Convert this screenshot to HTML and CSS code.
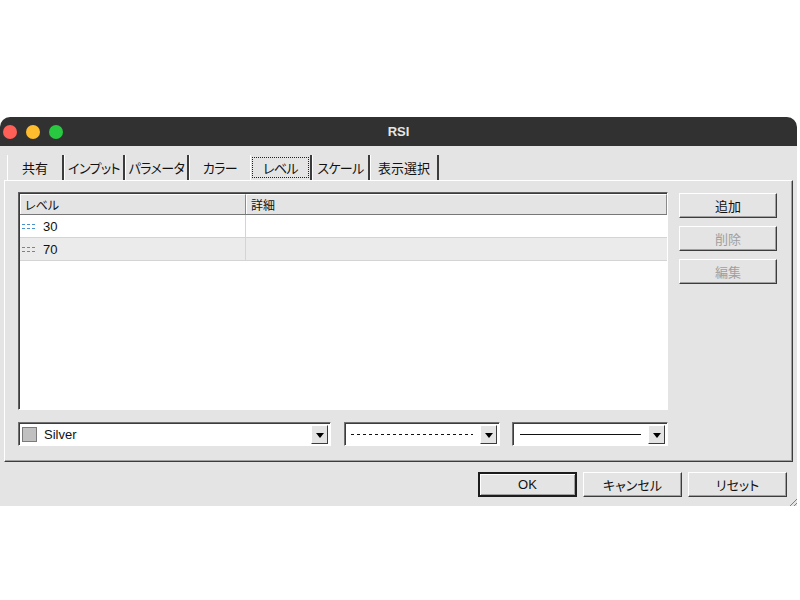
FILE: index.html
```html
<!DOCTYPE html>
<html lang="ja">

<head>
	<meta charset="utf-8">
	<title>RSI</title>
	<link rel="stylesheet" href="styles.css">
</head>

<body>

	<div class="window">

		<div class="titlebar">
			<div class="lights">
				<span class="light red"></span>
				<span class="light yellow"></span>
				<span class="light green"></span>
			</div>
			<div class="title">RSI</div>
		</div>

		<div class="dialog">

			<!-- tab strip -->
			<div class="tabs">
				<div class="tab">共有</div>
				<div class="tab">インプット</div>
				<div class="tab">パラメータ</div>
				<div class="tab tab-plain">カラー</div>
				<div class="tab active"><span class="focus">レベル</span></div>
				<div class="tab">スケール</div>
				<div class="tab">表示選択</div>
			</div>

			<div class="panel">

				<div class="top-area">
					<div class="list">
						<div class="list-head">
							<div class="hcell col-level">レベル</div>
							<div class="hcell col-desc">詳細</div>
						</div>
						<div class="row">
							<div class="cell col-level">
								<svg class="dots" width="14" height="8" viewBox="0 0 14 8">
									<line x1="0" y1="2.5" x2="14" y2="2.5" stroke="#4a90cc" stroke-dasharray="3 2" />
									<line x1="0" y1="6.5" x2="14" y2="6.5" stroke="#4a90cc" stroke-dasharray="3 2" />
								</svg>30
							</div>
							<div class="cell col-desc"></div>
						</div>
						<div class="row alt">
							<div class="cell col-level">
								<svg class="dots" width="14" height="8" viewBox="0 0 14 8">
									<line x1="0" y1="2.5" x2="14" y2="2.5" stroke="#4a90cc" stroke-dasharray="3 2" />
									<line x1="0" y1="6.5" x2="14" y2="6.5" stroke="#4a90cc" stroke-dasharray="3 2" />
								</svg>70
							</div>
							<div class="cell col-desc"></div>
						</div>
					</div>

					<div class="side-buttons">
						<button class="btn">追加</button>
						<button class="btn disabled">削除</button>
						<button class="btn disabled">編集</button>
					</div>
				</div>

				<div class="combos">
					<div class="combo combo-color">
						<span class="swatch"></span>
						<span class="combo-text">Silver</span>
						<span class="drop"><span class="arrow"></span></span>
					</div>
					<div class="combo combo-style">
						<span class="line-dash"></span>
						<span class="drop"><span class="arrow"></span></span>
					</div>
					<div class="combo combo-width">
						<span class="line-solid"></span>
						<span class="drop"><span class="arrow"></span></span>
					</div>
				</div>

			</div>

			<div class="footer">
				<button class="btn default">OK</button>
				<button class="btn">キャンセル</button>
				<button class="btn">リセット</button>
			</div>

			<!-- resize grip in the corner -->
			<svg class="grip" width="8" height="8" viewBox="0 0 8 8">
				<line x1="8" y1="1" x2="1" y2="8" stroke="#808080" />
				<line x1="8" y1="5" x2="5" y2="8" stroke="#808080" />
			</svg>

		</div>
	</div>

</body>

</html>
```

FILE: styles.css
```css
body {
	margin: 0;
	padding: 0;
	background-color: #fff;
	font-family: "Liberation Sans", "Noto Sans CJK JP", sans-serif;
	font-size: 13px;
	color: #111;
	font-feature-settings: "palt" 1;
}

.window {
	width: 797px;
	margin-top: 117px;
	border-radius: 10px 10px 0 0;
	overflow: hidden;
}

/* mac style title bar */
.titlebar {
	position: relative;
	height: 29px;
	background-color: #313131;
	display: flex;
	align-items: center;
}

.lights {
	display: flex;
	gap: 9px;
	padding-left: 3px;
}

.light {
	width: 14px;
	height: 14px;
	border-radius: 50%;
}

.red {
	background-color: #fe5f57;
}

.yellow {
	background-color: #febc2e;
}

.green {
	background-color: #28c840;
}

.title {
	position: absolute;
	left: 0;
	right: 0;
	text-align: center;
	color: #e6e6e6;
	font-weight: bold;
	font-size: 13px;
}

.dialog {
	position: relative;
	background-color: #e4e4e4;
	padding: 9px 4px 9px 4px;
}

/* tabs */
.tabs {
	display: flex;
	height: 25px;
	padding-left: 3px;
}

.tab {
	height: 25px;
	padding: 0;
	display: flex;
	align-items: center;
	justify-content: center;
	border-left: 1px solid #fff;
	border-right: 2px solid #3c3c3c;
	box-sizing: border-box;
	font-size: 13px;
	letter-spacing: -0.6px;
	white-space: nowrap;
}

.tab:nth-child(1) {
	width: 57px;
	letter-spacing: 0;
}

.tab:nth-child(2) {
	width: 61px;
}

.tab:nth-child(3) {
	width: 64px;
}

.tab:nth-child(4) {
	width: 61px;
	border-right: none;
}

.tab:nth-child(5) {
	width: 62px;
	padding: 2px 1px;
}

.tab:nth-child(6) {
	width: 58px;
}

.tab:nth-child(7) {
	width: 69px;
	letter-spacing: 0;
}

.focus {
	flex: 1;
	align-self: stretch;
	display: flex;
	align-items: center;
	justify-content: center;
	border: 1px dotted #222;
}

.panel {
	border: 1px solid;
	border-color: #fff #3c3c3c #3c3c3c #fff;
	box-shadow: inset -1px -1px #a0a0a0;
	padding: 11px 13px 15px 13px;
}

.top-area {
	display: flex;
	gap: 11px;
}

/* list view */
.list {
	width: 650px;
	height: 218px;
	box-sizing: border-box;
	background-color: #fff;
	border: 1px solid;
	border-color: #606060 #fff #fff #606060;
	box-shadow: inset 1px 1px #3c3c3c;
	padding: 1px 0 0 1px;
}

.list-head {
	display: flex;
	height: 20px;
	background-color: #e4e4e4;
	border-bottom: 1px solid #777;
}

.hcell {
	box-sizing: border-box;
	display: flex;
	align-items: center;
	padding-left: 4px;
	border-left: 1px solid #fff;
	border-top: 1px solid #fff;
	border-right: 1px solid #8a8a8a;
	font-size: 12px;
}

.col-level {
	width: 226px;
}

.col-desc {
	flex: 1;
}

.row {
	display: flex;
	height: 23px;
	border-bottom: 1px solid #d4d4d4;
	box-sizing: border-box;
}

.row.alt {
	background-color: #ebebeb;
}

.cell {
	box-sizing: border-box;
	display: flex;
	align-items: center;
	border-right: 1px solid #d4d4d4;
}

.cell.col-level {
	padding-left: 2px;
}

.cell.col-desc {
	border-right: none;
}

.dots {
	margin-right: 7px;
}

/* buttons */
.side-buttons {
	display: flex;
	flex-direction: column;
	gap: 8px;
	padding-top: 1px;
}

.btn {
	width: 98px;
	height: 25px;
	box-sizing: border-box;
	background-color: #e4e4e4;
	border: 1px solid;
	border-color: #fff #3c3c3c #3c3c3c #fff;
	box-shadow: inset -1px -1px #a0a0a0;
	font-family: "Liberation Sans", "Noto Sans CJK JP", sans-serif;
	font-size: 13px;
	color: #111;
	padding: 0;
	font-feature-settings: "palt" 1;
}

.btn.disabled {
	color: #a0a0a0;
}

.footer .btn {
	width: 99px;
}

.btn.default {
	border: 2px solid #1c1c1c;
	box-shadow: inset 1px 1px #fff, inset -1px -1px #a0a0a0;
}

/* combo boxes */
.combos {
	display: flex;
	margin-top: 12px;
}

.combo {
	height: 24px;
	box-sizing: border-box;
	background-color: #fff;
	border: 1px solid;
	border-color: #707070 #fff #fff #707070;
	box-shadow: inset 1px 1px #3c3c3c;
	display: flex;
	align-items: center;
	padding: 2px 2px 1px 3px;
}

.combo-color {
	width: 313px;
}

.combo-style {
	width: 156px;
	margin-left: 13px;
	padding-left: 6px;
}

.combo-width {
	width: 156px;
	margin-left: 12px;
	padding-left: 7px;
}

.swatch {
	width: 13px;
	height: 13px;
	background-color: #c0c0c0;
	border: 1px solid #7a7a7a;
	margin-right: 7px;
}

.combo-text {
	flex: 1;
	font-size: 13px;
}

.line-dash {
	flex: 1;
	height: 1px;
	margin-right: 7px;
	background: repeating-linear-gradient(90deg, #111 0 3px, transparent 3px 6px);
}

.line-solid {
	flex: 1;
	height: 1px;
	margin-right: 7px;
	background-color: #111;
}

.drop {
	width: 17px;
	align-self: stretch;
	box-sizing: border-box;
	background-color: #e4e4e4;
	border: 1px solid;
	border-color: #fff #3c3c3c #3c3c3c #fff;
	display: flex;
	align-items: center;
	justify-content: center;
}

.arrow {
	width: 0;
	height: 0;
	border-left: 4px solid transparent;
	border-right: 4px solid transparent;
	border-top: 5px solid #000;
	margin-top: 1px;
}

.footer {
	display: flex;
	justify-content: flex-end;
	gap: 6px;
	margin-top: 10px;
	padding-right: 6px;
}

.grip {
	position: absolute;
	right: 0;
	bottom: 0;
}
```
